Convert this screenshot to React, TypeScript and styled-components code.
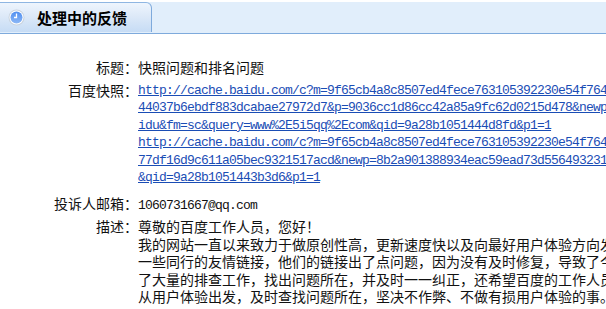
import styled, { createGlobalStyle } from 'styled-components'

const links = [
	[
		'http://cache.baidu.com/c?m=9f65cb4a8c8507ed4fece763105392230e54f764',
		'44037b6ebdf883dcabae27972d7&p=9036cc1d86cc42a85a9fc62d0215d478&newp',
		'idu&fm=sc&query=www%2E5i5qq%2Ecom&qid=9a28b1051444d8fd&p1=1',
	],
	[
		'http://cache.baidu.com/c?m=9f65cb4a8c8507ed4fece763105392230e54f764',
		'77df16d9c611a05bec9321517acd&newp=8b2a901388934eac59ead73d556493231',
		'&qid=9a28b1051443b3d6&p1=1',
	],
]

const desc = [
	'尊敬的百度工作人员，您好！',
	'我的网站一直以来致力于做原创性高，更新速度快以及向最好用户体验方向发展，',
	'一些同行的友情链接，他们的链接出了点问题，因为没有及时修复，导致了今天',
	'了大量的排查工作，找出问题所在，并及时一一纠正，还希望百度的工作人员能',
	'从用户体验出发，及时查找问题所在，坚决不作弊、不做有损用户体验的事。',
]

function ClockIcon() {
	return (
		<svg width="17" height="17" viewBox="0 0 17 17">
			<defs>
				<linearGradient id="clk" x1="0" y1="0" x2="0" y2="1">
					<stop offset="0" stopColor="#4f8ef0" />
					<stop offset="1" stopColor="#8db8f6" />
				</linearGradient>
			</defs>
			<circle cx="8.5" cy="8.5" r="8" fill="#c9d3de" />
			<circle cx="8.5" cy="8.5" r="7" fill="#fff" />
			<circle cx="8.5" cy="8.5" r="6" fill="url(#clk)" />
			<path d="M8.5 4.5 V8.5 H6" stroke="#fff" strokeWidth="1.3" fill="none" />
		</svg>
	)
}

function App() {
	return (
		<>
			<GlobalStyle />
			<Header>
				<Tab>
					<ClockIcon />
					<TabTitle>处理中的反馈</TabTitle>
				</Tab>
			</Header>
			<Content>
				<Row gap={5}>
					<Label>标题：</Label>
					<Value>快照问题和排名问题</Value>
				</Row>
				<Row gap={8}>
					<Label>百度快照：</Label>
					<Value>
						{links.map((lines, i) => (
							<Link key={i} href="#">
								{lines.map((l) => (
									<Line key={l}>{l}</Line>
								))}
							</Link>
						))}
					</Value>
				</Row>
				<Row gap={4}>
					<Label>投诉人邮箱：</Label>
					<Value>
						<Mono>1060731667@qq.com</Mono>
					</Value>
				</Row>
				<Row gap={0}>
					<Label>描述：</Label>
					<Value>
						{desc.map((d) => (
							<Line key={d}>{d}</Line>
						))}
					</Value>
				</Row>
			</Content>
		</>
	)
}

const GlobalStyle = createGlobalStyle`
	html, body {
		margin: 0;
		padding: 0;
		background: #fff;
		overflow: hidden;
	}
	body {
		font-family: "Noto Sans CJK SC", "Liberation Sans", sans-serif;
		font-size: 14px;
		color: #111;
	}
`

const Header = styled.div`
	margin-top: 2px;
	height: 31px;
	background: #e1eefb;
	border-bottom: 1px solid #7eaadc;
	display: flex;
`

const Tab = styled.div`
	width: 152px;
	height: 30px;
	box-sizing: border-box;
	border-top: 1px solid #8fb6e2;
	border-right: 1px solid #7eaadc;
	border-top-right-radius: 6px;
	background: linear-gradient(to bottom, #eef5fd 0%, #dde9f8 45%, #c6dcf5 100%);
	display: flex;
	align-items: center;
	padding-left: 8px;

	svg {
		flex: none;
	}
`

const TabTitle = styled.span`
	margin-left: 12px;
	font-size: 15px;
	font-weight: bold;
	color: #000;
`

const Content = styled.div`
	padding-top: 25px;
`

const Row = styled.div<{ gap: number }>`
	display: grid;
	grid-template-columns: 138px 1fr;
	line-height: 17.5px;
	margin-bottom: ${({ gap }) => gap}px;
`

const Label = styled.div`
	text-align: right;
	white-space: nowrap;
`

const Value = styled.div`
	white-space: nowrap;
	min-width: 0;
	overflow: hidden;
`

const Line = styled.div`
	white-space: nowrap;
`

const Mono = styled.span`
	font-family: "Liberation Mono", monospace;
	font-size: 13px;
	letter-spacing: -0.8px;
`

const Link = styled.a`
	display: block;
	font-family: "Liberation Mono", monospace;
	font-size: 13px;
	letter-spacing: -0.8px;
	color: #1a4db5;
	text-decoration: underline;
`

export default App
